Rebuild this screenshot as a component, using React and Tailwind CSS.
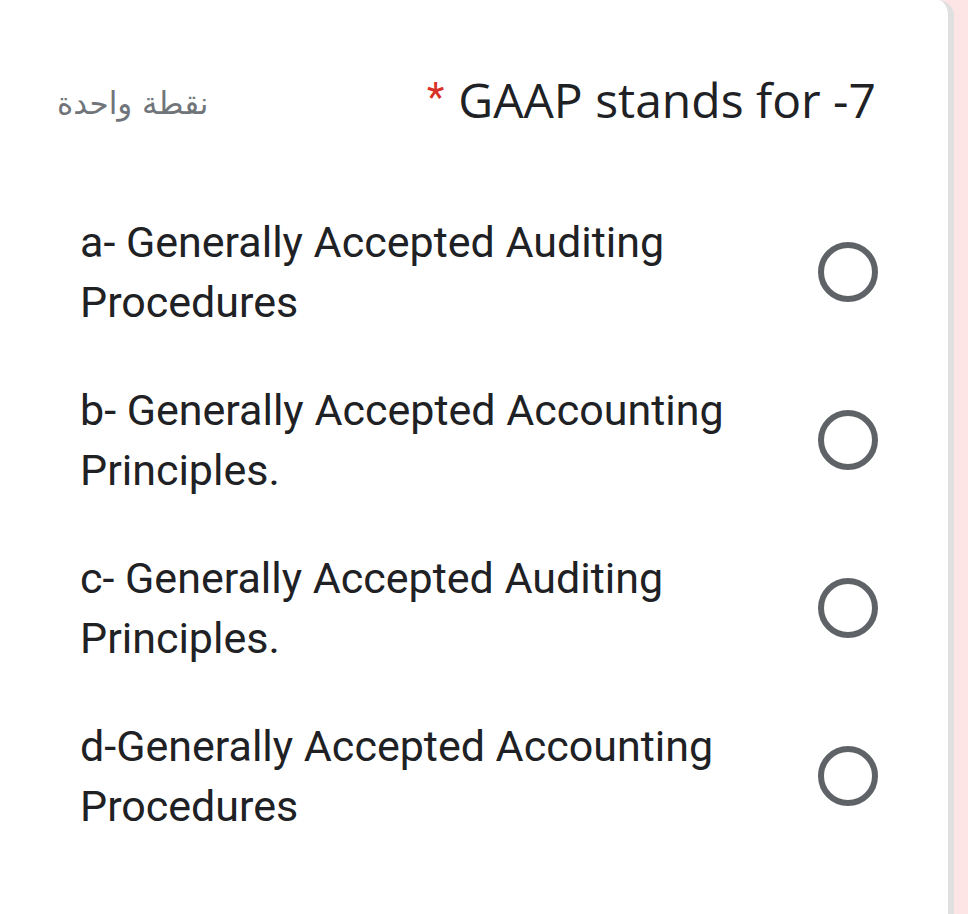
import React from "react";

const options = [
  ["a- Generally Accepted Auditing", "Procedures"],
  ["b- Generally Accepted Accounting", "Principles."],
  ["c- Generally Accepted Auditing", "Principles."],
  ["d-Generally Accepted Accounting", "Procedures"],
];

const Radio = () => (
  <div className="w-[60px] h-[60px] rounded-full border-[6px] border-[#5f6368] shrink-0" />
);

export default function App() {
  return (
    <div className="w-full h-[914px] bg-[#fde5e5] overflow-hidden" style={{ fontFamily: "Roboto, sans-serif" }}>
      <div className="w-[948px] h-full bg-white rounded-tr-[16px] border-r-[6px] border-[#e0e0e0] box-content">
        {/* header */}
        <div className="flex items-center justify-between pt-[72px] pl-[57px] pr-[72px]">
          <span
            className="text-[31px] text-[#70757a] leading-none mt-[6px]"
            style={{ fontFamily: "'DejaVu Sans', sans-serif" }}
          >
            نقطة واحدة
          </span>
          <h1
            className="text-[48px] text-[#202124] leading-[56px] flex items-start"
            style={{ fontFamily: "'Open Sans', sans-serif" }}
          >
            <span className="text-[#d93025] text-[40px] leading-none mr-[14px] mt-[6px]" style={{ fontFamily: "Roboto, sans-serif" }}>*</span>
            GAAP stands for -7
          </h1>
        </div>

        {/* options */}
        <div className="flex flex-col gap-[48px] mt-[84px] pl-[80px] pr-[70px]">
          {options.map((o, i) => (
            <div key={i} className="flex items-center justify-between">
              <div className="text-[43px] leading-[60px] text-[#202124]">
                <div>{o[0]}</div>
                <div>{o[1]}</div>
              </div>
              <Radio />
            </div>
          ))}
        </div>
      </div>
    </div>
  );
}
